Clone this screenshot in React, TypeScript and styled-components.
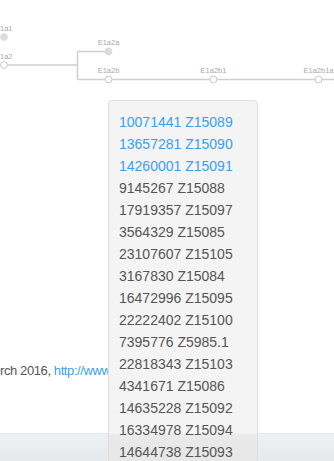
import styled, { createGlobalStyle } from "styled-components";

const GlobalStyle = createGlobalStyle`
  html, body {
    margin: 0;
    padding: 0;
    overflow: hidden;
    background: #fff;
    font-family: "Liberation Sans", Arial, sans-serif;
  }
`;

type Hit = { id: string; name: string; linked?: boolean };

const hits: Hit[] = [
  { id: "10071441", name: "Z15089", linked: true },
  { id: "13657281", name: "Z15090", linked: true },
  { id: "14260001", name: "Z15091", linked: true },
  { id: "9145267", name: "Z15088" },
  { id: "17919357", name: "Z15097" },
  { id: "3564329", name: "Z15085" },
  { id: "23107607", name: "Z15105" },
  { id: "3167830", name: "Z15084" },
  { id: "16472996", name: "Z15095" },
  { id: "22222402", name: "Z15100" },
  { id: "7395776", name: "Z5985.1" },
  { id: "22818343", name: "Z15103" },
  { id: "4341671", name: "Z15086" },
  { id: "14635228", name: "Z15092" },
  { id: "16334978", name: "Z15094" },
  { id: "14644738", name: "Z15093" },
];

type Node = { x: number; y: number; label: string; leaf?: boolean };

const nodes: Node[] = [
  { x: 4, y: 37, label: "1a1", leaf: true },
  { x: 4, y: 65, label: "1a2" },
  { x: 108.5, y: 51.5, label: "E1a2a", leaf: true },
  { x: 108.5, y: 79.5, label: "E1a2b" },
  { x: 213.5, y: 79.5, label: "E1a2b1" },
  { x: 318.5, y: 79.5, label: "E1a2b1a" },
];

function Tree() {
  return (
    <TreeSvg width={334} height={92} viewBox="0 0 334 92">
      <path
        d="M4 65 H77.5 M77.5 51.5 V79.5 M77.5 51.5 H108.5 M77.5 79.5 H340"
        fill="none"
        stroke="#d0d0d0"
        strokeWidth={1.5}
      />
      {nodes.map((n) => (
        <g key={n.label}>
          <circle
            cx={n.x}
            cy={n.y}
            r={3.4}
            fill={n.leaf ? "#dcdcdc" : "#fff"}
            stroke={n.leaf ? "#dcdcdc" : "#c8c8c8"}
            strokeWidth={1}
          />
          <text x={n.x} y={n.y - 6.5} textAnchor={n.x < 10 ? "start" : "middle"} dx={n.x < 10 ? -4 : 0}>
            {n.label}
          </text>
        </g>
      ))}
    </TreeSvg>
  );
}

export default function App() {
  return (
    <Page>
      <GlobalStyle />
      <Tree />
      <Main>
        <Note>
          rch 2016, <Link>http://www</Link>
        </Note>
      </Main>
      <Footer />
      <Popover>
        {hits.map((h) => (
          <Row key={h.id} linked={h.linked}>
            {h.id} {h.name}
          </Row>
        ))}
      </Popover>
    </Page>
  );
}

const Page = styled.div`
  position: relative;
  height: 100vh;
  display: flex;
  flex-direction: column;
  overflow: hidden;
`;

const TreeSvg = styled.svg`
  display: block;
  flex: none;
  text {
    font-family: "Liberation Sans", Arial, sans-serif;
    font-size: 7.5px;
    fill: #a8a8a8;
  }
`;

const Main = styled.div`
  flex: 1;
  display: flex;
  flex-direction: column;
  justify-content: flex-end;
  padding-bottom: 52px;
`;

const Note = styled.p`
  margin: 0;
  width: 108px;
  overflow: hidden;
  font-size: 13px;
  line-height: 20px;
  letter-spacing: -0.4px;
  color: #555;
  white-space: nowrap;
`;

const Link = styled.a`
  color: #3a9ff2;
  text-decoration: none;
`;

const Footer = styled.div`
  flex: none;
  height: 27px;
  border-top: 1px solid #e3e6e9;
  background: linear-gradient(#eef1f4, #e6e9ec);
`;

const Popover = styled.div`
  position: absolute;
  top: 100px;
  left: 108px;
  width: 150px;
  height: 380px;
  padding: 10px 10px 0;
  box-sizing: border-box;
  overflow: hidden;
  background: linear-gradient(#f4f4f4 0, #f4f4f4 332px, #e9e9e9 334px, #e6e6e6 100%);
  border: 1px solid #dedede;
  border-radius: 4px;
`;

const Row = styled.div<{ linked?: boolean }>`
  font-size: 14px;
  line-height: 22px;
  white-space: nowrap;
  color: ${(p) => (p.linked ? "#3a9ff2" : "#555")};
`;
